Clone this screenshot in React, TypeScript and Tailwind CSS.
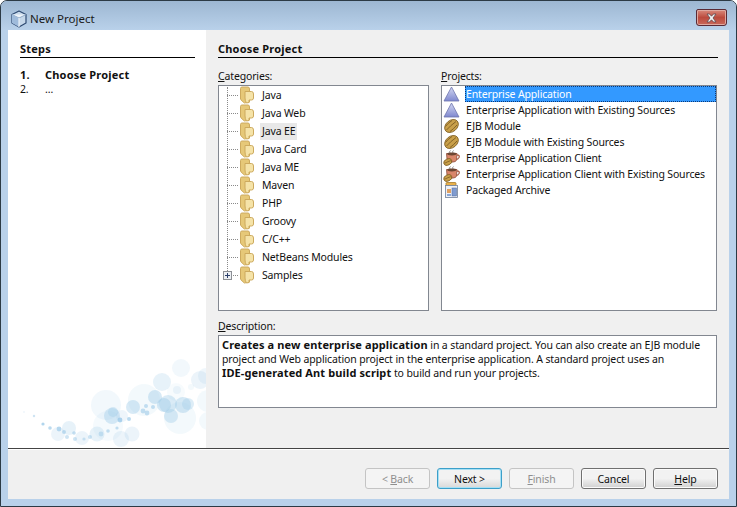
import React from "react";

const CATEGORIES = ["Java", "Java Web", "Java EE", "Java Card", "Java ME", "Maven", "PHP", "Groovy", "C/C++", "NetBeans Modules", "Samples"];

const PROJECTS: { label: string; icon: "tri" | "bean" | "cup" | "box" }[] = [
  { label: "Enterprise Application", icon: "tri" },
  { label: "Enterprise Application with Existing Sources", icon: "tri" },
  { label: "EJB Module", icon: "bean" },
  { label: "EJB Module with Existing Sources", icon: "bean" },
  { label: "Enterprise Application Client", icon: "cup" },
  { label: "Enterprise Application Client with Existing Sources", icon: "cup" },
  { label: "Packaged Archive", icon: "box" },
];

// x, y, r, opacity of the bubbles in the corner of the steps panel
const BUBBLES: [number, number, number, number][] = [
  [16, 62, 0.8, 0.3], [26, 66, 1.2, 0.5], [35, 74, 1.6, 0.8], [42, 78, 1.8, 0.7], [50, 84, 7, 0.2], [61, 78, 7, 0.25],
  [51, 79, 2.4, 0.7], [56, 82, 2, 0.6], [59, 87, 2, 0.5], [66, 83, 1.8, 0.6], [67, 89, 2, 0.5], [74, 88, 7, 0.2],
  [76, 89, 1.6, 0.5], [82, 87, 2, 0.5], [89, 84, 7.5, 0.25], [93, 84, 2.4, 0.5], [100, 81, 1.8, 0.6], [98, 55, 15, 0.13],
  [100, 76, 15, 0.1], [104, 66, 8, 0.4], [105, 62, 5, 0.35], [112, 70, 2.4, 0.8], [109, 78, 1.6, 0.6], [114, 66, 6, 0.18],
  [113, 89, 8, 0.2], [124, 84, 7.5, 0.2], [121, 69, 2, 0.7], [125, 57, 7, 0.4], [136, 50, 16, 0.12], [135, 61, 2.4, 0.6],
  [139, 63, 2.4, 0.6], [138, 56, 2, 0.6], [145, 57, 2, 0.6], [147, 47, 7, 0.42], [154, 32, 9, 0.25], [156, 55, 7, 0.42],
  [160, 54, 9, 0.38], [163, 66, 7, 0.38], [173, 18, 9, 0.13], [172, 68, 16, 0.12], [168, 42, 9, 0.08], [169, 40, 4, 0.16],
  [175, 55, 8, 0.42], [180, 54, 6, 0.35], [183, 37, 3, 0.12], [192, 30, 9, 0.2], [198, 26, 8, 0.16], [200, 51, 11, 0.12], [200, 71, 9, 0.12],
];

function Folder() {
  return (
    <svg width="16" height="18" viewBox="0 0 16 18" className="shrink-0">
      <path d="M1.5 2.5 Q1.5 1 3 1 H9 Q10.5 1 10.5 3 V16 L5.5 17 Q3 15.5 1.5 13 Z" fill="#e6c878" stroke="#cdaa5e" strokeWidth="1" />
      <path d="M6 5.5 H12.5 Q14.5 5.5 14.5 8 V12 Q14.5 14 12.5 14 H10 V16.5 L7.5 17 Q6 15 6 12 Z" fill="#f5e3a8" stroke="#cdaa5e" strokeWidth="1" />
    </svg>
  );
}

function ProjectIcon({ kind }: { kind: "tri" | "bean" | "cup" | "box" }) {
  if (kind === "tri") {
    return (
      <svg width="17" height="16" viewBox="0 0 17 16" className="shrink-0">
        <defs>
          <linearGradient id="tri" x1="0" y1="0" x2="0" y2="1">
            <stop offset="0" stopColor="#d4d9f2" />
            <stop offset="1" stopColor="#7f88cf" />
          </linearGradient>
        </defs>
        <path d="M8.5 1 L16 15 H1 Z" fill="url(#tri)" stroke="#6d75ad" strokeWidth="0.8" />
      </svg>
    );
  }
  if (kind === "bean") {
    return (
      <svg width="17" height="16" viewBox="0 0 17 16" className="shrink-0">
        <ellipse cx="8.5" cy="8" rx="7.6" ry="5.6" transform="rotate(-40 8.5 8)" fill="#c9a04a" stroke="#7d5c22" strokeWidth="0.8" />
        <path d="M3.5 12 Q7 8 13 3.5 M2.5 8.5 Q5 5 9 2.5 M7 13.5 Q10.5 11 14 7" fill="none" stroke="#7d5c22" strokeWidth="0.9" />
      </svg>
    );
  }
  if (kind === "cup") {
    return (
      <svg width="17" height="16" viewBox="0 0 17 16" className="shrink-0">
        <path d="M7 3 Q6 1.5 7.5 0.5 M10 3 Q9 1.5 10.5 0.5" fill="none" stroke="#8a8a8a" strokeWidth="1" />
        <path d="M3.5 3.5 H14 L13.5 10 Q13 12 10 12 H7 Q4.5 11 4 9 Z" fill="#d9866a" stroke="#8a4a38" strokeWidth="0.8" />
        <path d="M14 5 Q17 5 16 7.5 Q15 9.5 13 9.5" fill="none" stroke="#a85f48" strokeWidth="1.3" />
        <ellipse cx="8.8" cy="4" rx="4.6" ry="1.4" fill="#6d4632" />
        <ellipse cx="4.8" cy="12" rx="4.2" ry="3" transform="rotate(-25 4.8 12)" fill="#c9a04a" stroke="#7d5c22" strokeWidth="0.8" />
        <path d="M1.8 13.2 Q5 11.5 7.8 10.6" fill="none" stroke="#7d5c22" strokeWidth="0.8" />
      </svg>
    );
  }
  return (
    <svg width="17" height="16" viewBox="0 0 17 16" className="shrink-0">
      <rect x="3" y="0.5" width="10" height="3" rx="1" fill="#e8b04a" stroke="#a57a2c" strokeWidth="0.8" />
      <rect x="2.5" y="3.5" width="12" height="12" fill="#eef1f7" stroke="#6f7f9a" strokeWidth="0.8" />
      <rect x="4" y="7" width="4" height="4" fill="#e0a060" />
      <rect x="9" y="6" width="4.5" height="8" fill="#7f9bd0" stroke="#4f6a9a" strokeWidth="0.5" />
      <rect x="4" y="12" width="4" height="2" fill="#8aa6d6" />
    </svg>
  );
}

function WizardButton({ children, disabled, focused }: { children: React.ReactNode; disabled?: boolean; focused?: boolean }) {
  return (
    <div
      className={
        "flex h-[21px] w-[65px] items-center justify-center rounded-[3px] border " +
        (disabled
          ? "border-[#c4c4c4] bg-[#f4f4f4] text-[#8f8f8f]"
          : focused
            ? "border-[#3c9fc9] bg-gradient-to-b from-[#f2f2f2] from-50% to-[#d8d8d8] text-[#101010] shadow-[inset_0_0_0_1px_#a6e0f5]"
            : "border-[#707070] bg-gradient-to-b from-[#f2f2f2] from-50% to-[#d0d0d0] text-[#101010] shadow-[inset_0_0_0_1px_#fbfbfb]")
      }
    >
      {children}
    </div>
  );
}

export default function App() {
  return (
    <div className="flex h-[507px] w-[737px] flex-col overflow-hidden rounded-t-[7px] border border-[#2c3a45] bg-[#b9d1ea] font-['Noto_Sans',sans-serif] text-[10.5px] leading-[14px] tracking-[-0.15px] text-[#111]">
      <div className="flex h-[29px] shrink-0 items-center bg-gradient-to-b from-[#9db7d2] to-[#b9d1ea] pl-[9px] pr-[8px] pt-[7px]">
        <svg width="18" height="18" viewBox="0 0 18 18" className="shrink-0">
          <path d="M9 1 L16 4.5 V13 L9 17 L2 13 V4.5 Z" fill="#c6d8ea" stroke="#2e4a72" strokeWidth="1.2" strokeLinejoin="round" />
          <path d="M2 4.5 L9 8 L16 4.5" fill="#eef4fa" stroke="#7e9bbd" strokeWidth="0.8" />
          <path d="M9 8 V17 L2 13 V4.5 Z" fill="#9fbbdb" />
          <path d="M9 8 V17" stroke="#f4f8fc" strokeWidth="1" />
        </svg>
        <span className="ml-[2px] text-[11.5px] tracking-normal text-[#1a1a1a]">New Project</span>
        <div className="ml-auto mr-[1px] mt-[-3px] flex h-[17px] w-[31px] items-center justify-center rounded-b-[3px] rounded-t-[2px] border border-[#5a2a35] bg-gradient-to-b from-[#d9897c] via-[#bb4a3d] to-[#c9685a] shadow-[inset_0_0_0_1px_#dfa9a0]">
          <svg width="13" height="10" viewBox="0 0 13 10">
            <path d="M2 1 H4.5 L6.5 3.2 L8.5 1 H11 L8 5 L11 9 H8.5 L6.5 6.8 L4.5 9 H2 L5 5 Z" fill="#f2f2f2" stroke="#5b4a50" strokeWidth="0.8" />
          </svg>
        </div>
      </div>

      <div className="mx-[7px] flex h-[469px] flex-col bg-[#f0f0f0]">
        <div className="flex h-[418px] shrink-0">
          <div className="relative w-[198px] shrink-0 overflow-hidden bg-white pl-[12px] pr-[11px] pt-[12px]">
            <div className="border-b border-black pb-[1px] text-[11px] font-bold leading-[14px] tracking-[0.2px]">Steps</div>
            <div className="mt-[10px] flex text-[11px] font-bold tracking-[0.2px]">
              <span className="w-[25px]">1.</span>
              <span>Choose Project</span>
            </div>
            <div className="flex leading-[14px]">
              <span className="w-[25px]">2.</span>
              <span>…</span>
            </div>
            <svg width="198" height="98" viewBox="0 0 198 98" className="absolute bottom-0 left-0">
              {BUBBLES.map(([x, y, r, o], i) => (
                <circle key={i} cx={x} cy={y} r={r} fill="#9ecae8" opacity={o} />
              ))}
            </svg>
          </div>

          <div className="min-w-0 flex-1 pl-[12px] pr-[11px] pt-[12px]">
            <div className="border-b border-black pb-[1px] text-[11px] font-bold leading-[14px] tracking-[0.2px]">Choose Project</div>
            <div className="mt-[11px] flex gap-[12px]">
              <div className="w-[211px] shrink-0">
                <div className="h-[14px]">
                  <u>C</u>ategories:
                </div>
                <div className="relative mt-[2px] h-[226px] border border-[#828790] bg-white">
                  <div className="absolute bottom-[35px] left-[8px] top-[1px] border-l border-dotted border-[#8a8a8a]" />
                  {CATEGORIES.map((name) => (
                    <div key={name} className="relative flex h-[18px] items-center pl-[20px]">
                      <div className="absolute left-[8px] top-[9px] w-[11px] border-t border-dotted border-[#8a8a8a]" />
                      {name === "Samples" && (
                        <div className="absolute left-[4px] top-[5px] flex h-[9px] w-[9px] items-center justify-center border border-[#8c8f94] bg-[#eceff3]">
                          <svg width="7" height="7" viewBox="0 0 7 7">
                            <path d="M1 3.5 H6 M3.5 1 V6" stroke="#2a3f6b" strokeWidth="1" />
                          </svg>
                        </div>
                      )}
                      <Folder />
                      <span className={"ml-[5px] px-[2px] leading-[17px] " + (name === "Java EE" ? "bg-[#e8e8e8]" : "")}>{name}</span>
                    </div>
                  ))}
                </div>
              </div>
              <div className="min-w-0 flex-1">
                <div className="h-[14px]">
                  <u>P</u>rojects:
                </div>
                <div className="mt-[2px] h-[226px] w-[276px] border border-[#828790] bg-white pl-[1px]">
                  {PROJECTS.map((p, i) => (
                    <div key={p.label} className="flex h-[16px] items-center">
                      <ProjectIcon kind={p.icon} />
                      <span
                        className={
                          "ml-[5px] flex h-[16px] items-center whitespace-nowrap " +
                          (i === 0 ? "flex-1 border border-dotted border-[#0a3a7a] bg-[#3399ff] text-white" : "pl-[1px]")
                        }
                      >
                        {p.label}
                      </span>
                    </div>
                  ))}
                </div>
              </div>
            </div>
            <div className="mt-[8px] h-[14px]">
              <u>D</u>escription:
            </div>
            <div className="mt-[2px] h-[73px] w-[499px] whitespace-nowrap border border-[#828790] bg-white px-[3px] pt-[2px] leading-[14px] tracking-[-0.12px]">
              <b className="text-[11px] tracking-[0.12px]">Creates a new enterprise application</b> in a standard project. You can also create an EJB module
              <br />
              project and Web application project in the enterprise application. A standard project uses an
              <br />
              <b className="text-[11px] tracking-[0.12px]">IDE-generated Ant build script</b> to build and run your projects.
            </div>
          </div>
        </div>

        <div className="h-[2px] shrink-0 border-b border-white bg-[#444]" />

        <div className="flex flex-1 items-start justify-end gap-[7px] pr-[11px] pt-[18px]">
          <WizardButton disabled>
            &lt;&nbsp;<u>B</u>ack
          </WizardButton>
          <WizardButton focused>Next &gt;</WizardButton>
          <WizardButton disabled>
            <u>F</u>inish
          </WizardButton>
          <WizardButton>Cancel</WizardButton>
          <WizardButton>
            <u>H</u>elp
          </WizardButton>
        </div>
      </div>
    </div>
  );
}
